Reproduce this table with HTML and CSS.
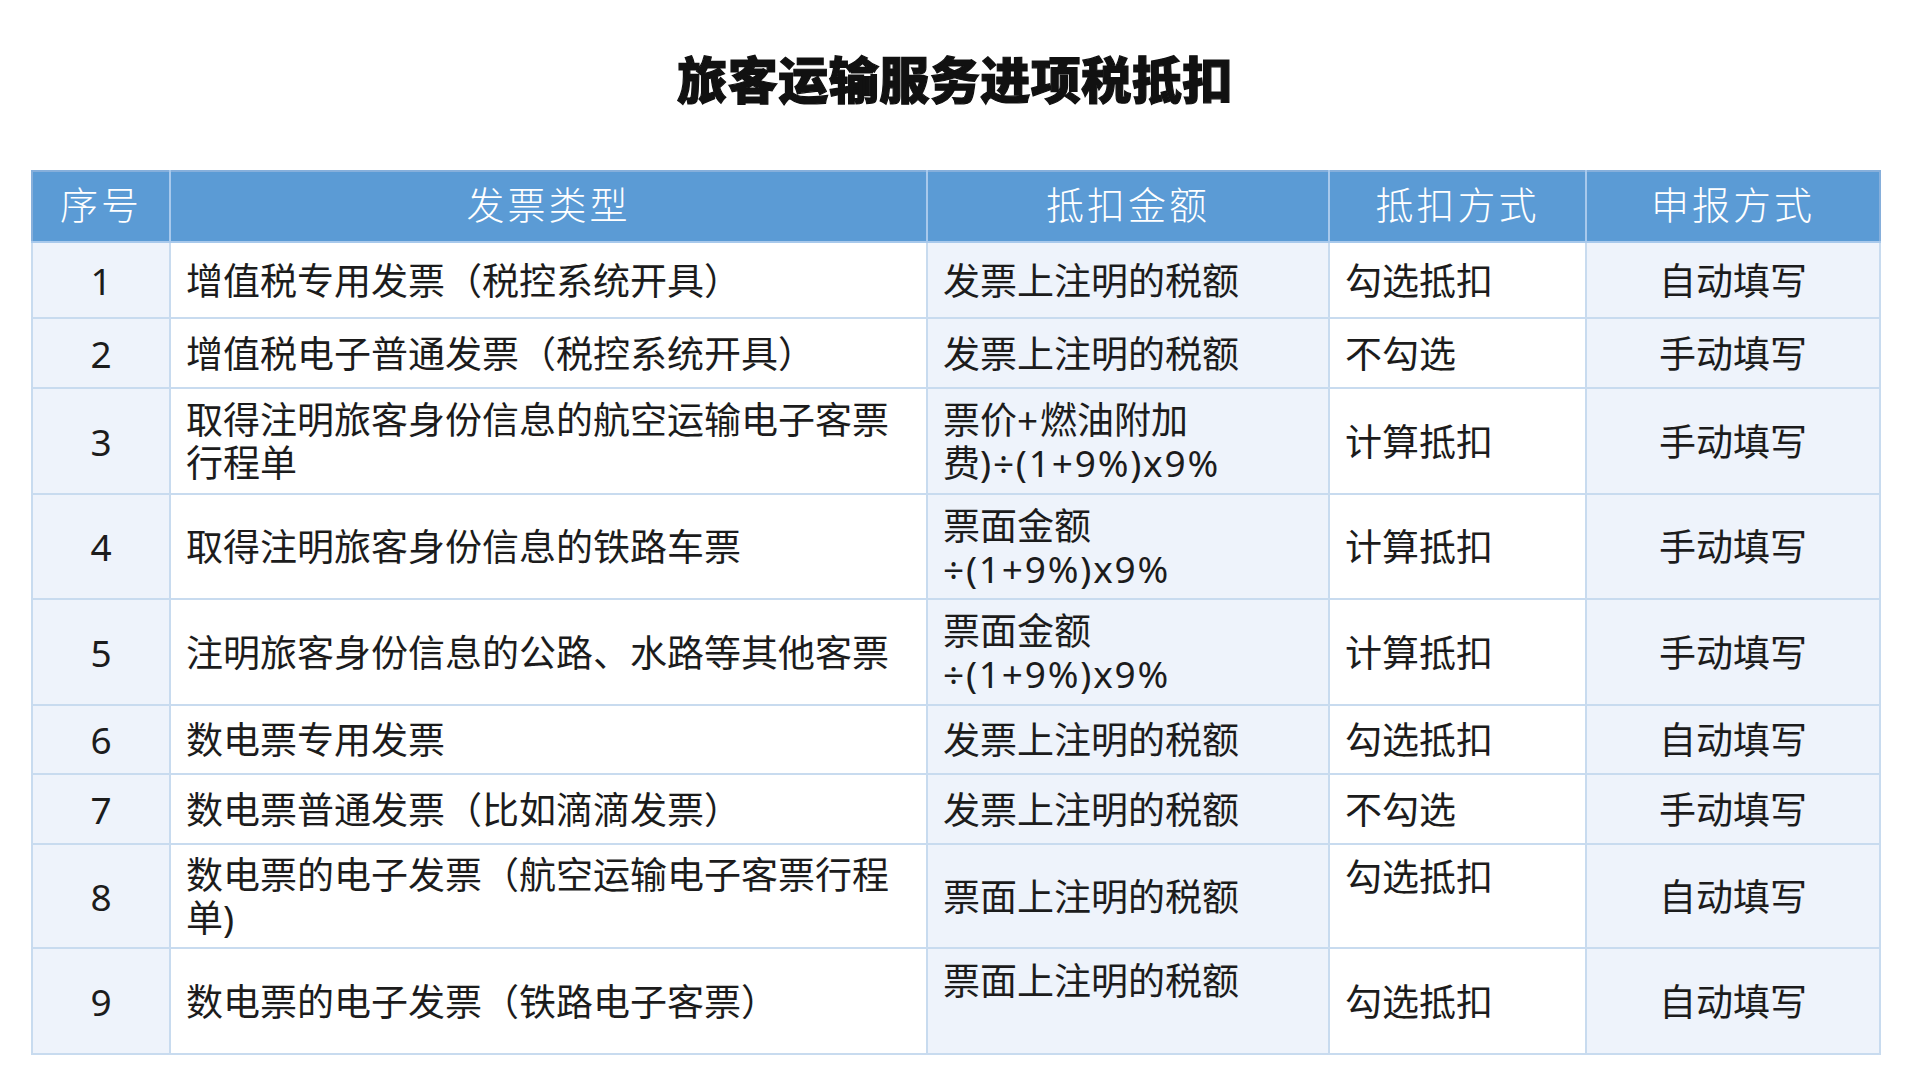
FILE: index.html
```html
<!DOCTYPE html>
<html lang="zh-CN">
<head>
<meta charset="utf-8">
<title>旅客运输服务进项税抵扣</title>
<link rel="stylesheet" href="styles.css">
</head>
<body>
<main class="page">
  <h1 class="title">旅客运输服务进项税抵扣</h1>
  <table class="tax-table">
    <colgroup>
      <col class="c-no">
      <col class="c-type">
      <col class="c-amount">
      <col class="c-method">
      <col class="c-report">
    </colgroup>
    <thead>
      <tr class="h-head">
        <th>序号</th>
        <th>发票类型</th>
        <th>抵扣金额</th>
        <th>抵扣方式</th>
        <th>申报方式</th>
      </tr>
    </thead>
    <tbody>
      <tr class="h-76">
        <td class="no">1</td>
        <td class="type">增值税专用发票（税控系统开具）</td>
        <td class="amount">发票上注明的税额</td>
        <td class="method">勾选抵扣</td>
        <td class="report">自动填写</td>
      </tr>
      <tr class="h-70">
        <td class="no">2</td>
        <td class="type">增值税电子普通发票（税控系统开具）</td>
        <td class="amount">发票上注明的税额</td>
        <td class="method">不勾选</td>
        <td class="report">手动填写</td>
      </tr>
      <tr class="h-106">
        <td class="no">3</td>
        <td class="type">取得注明旅客身份信息的航空运输电子客票<br>行程单</td>
        <td class="amount">票价<span class="formula">+</span>燃油附加<br>费<span class="formula">)÷(1+9%)x9%</span></td>
        <td class="method">计算抵扣</td>
        <td class="report">手动填写</td>
      </tr>
      <tr class="h-105">
        <td class="no">4</td>
        <td class="type">取得注明旅客身份信息的铁路车票</td>
        <td class="amount">票面金额<br><span class="formula">÷(1+9%)x9%</span></td>
        <td class="method">计算抵扣</td>
        <td class="report">手动填写</td>
      </tr>
      <tr class="h-106">
        <td class="no">5</td>
        <td class="type">注明旅客身份信息的公路、水路等其他客票</td>
        <td class="amount">票面金额<br><span class="formula">÷(1+9%)x9%</span></td>
        <td class="method">计算抵扣</td>
        <td class="report">手动填写</td>
      </tr>
      <tr class="h-69">
        <td class="no">6</td>
        <td class="type">数电票专用发票</td>
        <td class="amount">发票上注明的税额</td>
        <td class="method">勾选抵扣</td>
        <td class="report">自动填写</td>
      </tr>
      <tr class="h-70">
        <td class="no">7</td>
        <td class="type">数电票普通发票（比如滴滴发票）</td>
        <td class="amount">发票上注明的税额</td>
        <td class="method">不勾选</td>
        <td class="report">手动填写</td>
      </tr>
      <tr class="h-104">
        <td class="no">8</td>
        <td class="type">数电票的电子发票（航空运输电子客票行程<br>单)</td>
        <td class="amount">票面上注明的税额</td>
        <td class="method top">勾选抵扣</td>
        <td class="report">自动填写</td>
      </tr>
      <tr class="h-106">
        <td class="no">9</td>
        <td class="type">数电票的电子发票（铁路电子客票）</td>
        <td class="amount top">票面上注明的税额</td>
        <td class="method">勾选抵扣</td>
        <td class="report">自动填写</td>
      </tr>
    </tbody>
  </table>
</main>
</body>
</html>
```
FILE: styles.css
```css
html, body {
  margin: 0;
  padding: 0;
  background: #ffffff;
}

body {
  font-family: "Noto Sans", "Noto Sans CJK SC", sans-serif;
  color: #1c1c1c;
}

.page {
  width: 1910px;
  height: 1080px;
  display: flex;
  flex-direction: column;
  align-items: center;
  overflow: hidden;
}

.title {
  margin: 46px 0 62px;
  height: 62px;
  line-height: 62px;
  font-family: "Noto Sans CJK SC", sans-serif;
  font-weight: 900;
  font-size: 50px;
  color: #111111;
  letter-spacing: 0.5px;
  -webkit-text-stroke: 1.2px #111111;
}

.tax-table {
  width: 1848px;
  margin-left: 2px;
  border-collapse: collapse;
  table-layout: fixed;
  border: 2px solid #86afdb;
}

.c-no { width: 138px; }
.c-type { width: 757px; }
.c-amount { width: 402px; }
.c-method { width: 257px; }
.c-report { width: 294px; }

.tax-table th {
  background: #5b9bd5;
  color: #ffffff;
  font-family: "Noto Sans CJK SC", sans-serif;
  font-weight: 300;
  font-size: 38px;
  line-height: 46px;
  letter-spacing: 3px;
  text-align: center;
  vertical-align: middle;
  padding: 0 0 8px;
  border-left: 2px solid #a8c9ec;
  border-bottom: 2px solid #a8c9ec;
}

.tax-table th:first-child {
  border-left: none;
}

.tax-table td {
  font-size: 37px;
  line-height: 43px;
  padding: 0 15px;
  vertical-align: middle;
  border: 2px solid #c8dbef;
  text-align: left;
}

.formula {
  letter-spacing: 1.8px;
}

.tax-table td.no,
.tax-table td.amount,
.tax-table td.report {
  background: #eef3fb;
}

.tax-table td.type,
.tax-table td.method {
  background: #ffffff;
}

.tax-table td.no,
.tax-table td.report {
  text-align: center;
  padding: 0;
}

.tax-table td.top {
  vertical-align: top;
  padding-top: 10px;
}

.h-head { height: 71px; }
.h-76 { height: 76px; }
.h-70 { height: 70px; }
.h-69 { height: 69px; }
.h-104 { height: 104px; }
.h-105 { height: 105px; }
.h-106 { height: 106px; }
```
